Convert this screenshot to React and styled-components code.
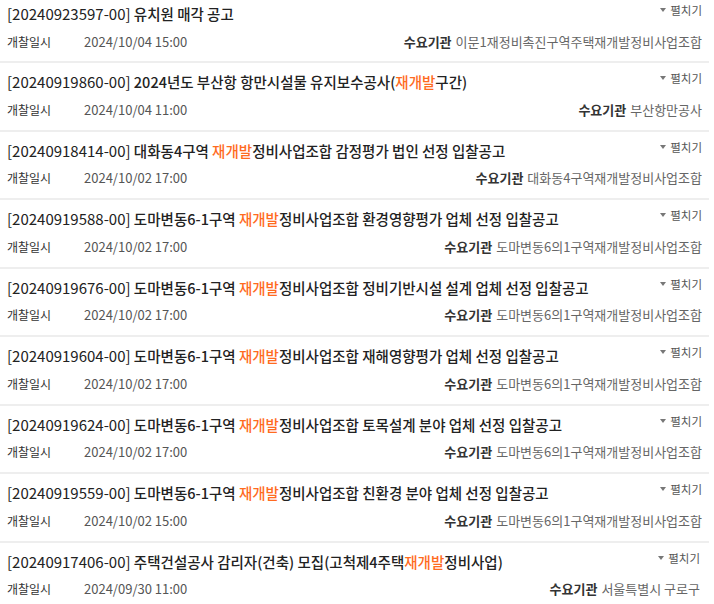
import React from "react";
import styled, { createGlobalStyle } from "styled-components";

const Global = createGlobalStyle`
  body {
    margin: 0;
    background: #fff;
    font-family: "Noto Sans CJK KR", "Noto Sans", sans-serif;
  }
`;

const List = styled.ul`
  list-style: none;
  margin: 0;
  padding: 0;
  width: 709px;
`;

const Item = styled.li`
  border-bottom: 2px solid #eeeeee;
  padding: 5px 7px 0 7px;
  height: 68.5px;
  box-sizing: border-box;
  display: flex;
  flex-direction: column;
  &:first-child {
    height: 63px;
    padding-top: 0;
  }
  &:last-child {
    border-bottom: none;
    padding-right: 9px;
  }
`;

const Top = styled.div`
  display: flex;
  align-items: flex-start;
  justify-content: space-between;
  height: 30px;
`;

const Title = styled.div`
  font-size: 14.5px;
  line-height: 28px;
  color: #222;
  font-weight: 500;
  white-space: nowrap;

  .no {
    font-weight: 400;
    font-size: 15px;
  }
  em {
    font-style: normal;
    color: #ff6b1f;
  }
`;

const Toggle = styled.span`
  font-size: 11.5px;
  color: #555;
  line-height: 20px;
  white-space: nowrap;

  &::before {
    content: "";
    display: inline-block;
    border-left: 3.5px solid transparent;
    border-right: 3.5px solid transparent;
    border-top: 4px solid #777;
    margin-right: 4px;
    vertical-align: 3px;
  }
`;

const Bottom = styled.div`
  display: flex;
  align-items: center;
  justify-content: space-between;
  height: 22px;
  font-size: 13px;
`;

const Label = styled.span`
  color: #333;
  font-size: 12px;
  display: inline-block;
  width: 77px;
`;

const DateText = styled.span`
  color: #555;
  font-size: 13px;
`;

const Org = styled.div`
  color: #666;
  white-space: nowrap;
  b {
    color: #333;
    font-size: 13px;
    font-weight: 700;
    margin-right: 4px;
  }
`;

const rows = [
  { no: "20240923597-00", title: ["유치원 매각 공고"], date: "2024/10/04 15:00", org: "이문1재정비촉진구역주택재개발정비사업조합" },
  { no: "20240919860-00", title: ["2024년도 부산항 항만시설물 유지보수공사(", "재개발", "구간)"], date: "2024/10/04 11:00", org: "부산항만공사" },
  { no: "20240918414-00", title: ["대화동4구역 ", "재개발", "정비사업조합 감정평가 법인 선정 입찰공고"], date: "2024/10/02 17:00", org: "대화동4구역재개발정비사업조합" },
  { no: "20240919588-00", title: ["도마변동6-1구역 ", "재개발", "정비사업조합 환경영향평가 업체 선정 입찰공고"], date: "2024/10/02 17:00", org: "도마변동6의1구역재개발정비사업조합" },
  { no: "20240919676-00", title: ["도마변동6-1구역 ", "재개발", "정비사업조합 정비기반시설 설계 업체 선정 입찰공고"], date: "2024/10/02 17:00", org: "도마변동6의1구역재개발정비사업조합" },
  { no: "20240919604-00", title: ["도마변동6-1구역 ", "재개발", "정비사업조합 재해영향평가 업체 선정 입찰공고"], date: "2024/10/02 17:00", org: "도마변동6의1구역재개발정비사업조합" },
  { no: "20240919624-00", title: ["도마변동6-1구역 ", "재개발", "정비사업조합 토목설계 분야 업체 선정 입찰공고"], date: "2024/10/02 17:00", org: "도마변동6의1구역재개발정비사업조합" },
  { no: "20240919559-00", title: ["도마변동6-1구역 ", "재개발", "정비사업조합 친환경 분야 업체 선정 입찰공고"], date: "2024/10/02 15:00", org: "도마변동6의1구역재개발정비사업조합" },
  { no: "20240917406-00", title: ["주택건설공사 감리자(건축) 모집(고척제4주택", "재개발", "정비사업)"], date: "2024/09/30 11:00", org: "서울특별시 구로구" },
];

export default function App() {
  return (
    <>
      <Global />
      <List>
        {rows.map((r) => (
          <Item key={r.no}>
            <Top>
              <Title>
                <span className="no">[{r.no}]</span>{" "}
                {r.title.map((t, i) => (i === 1 ? <em key={i}>{t}</em> : <span key={i}>{t}</span>))}
              </Title>
              <Toggle>펼치기</Toggle>
            </Top>
            <Bottom>
              <div>
                <Label>개찰일시</Label>
                <DateText>{r.date}</DateText>
              </div>
              <Org>
                <b>수요기관</b>
                {r.org}
              </Org>
            </Bottom>
          </Item>
        ))}
      </List>
    </>
  );
}
